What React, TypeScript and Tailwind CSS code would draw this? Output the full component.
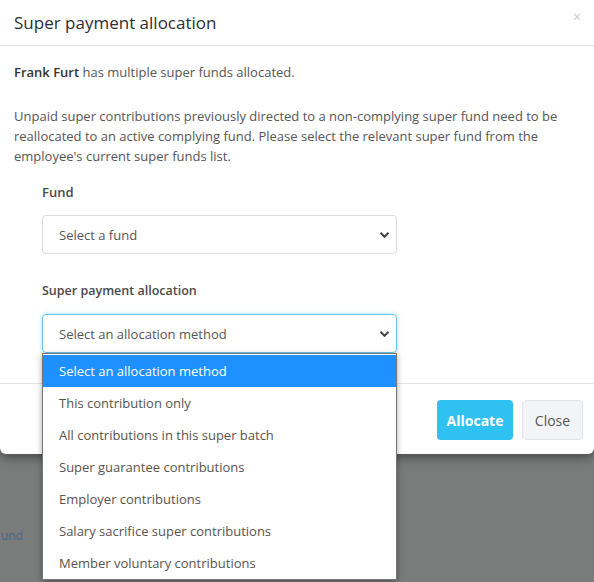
import React from "react";

const Chevron = () => (
  <svg width="11" height="8" viewBox="0 0 11 8" className="absolute right-[6px] top-1/2 -translate-y-1/2">
    <path d="M1.5 1.8 L5.5 5.8 L9.5 1.8" fill="none" stroke="#444" strokeWidth="2" />
  </svg>
);

const options = [
  "Select an allocation method",
  "This contribution only",
  "All contributions in this super batch",
  "Super guarantee contributions",
  "Employer contributions",
  "Salary sacrifice super contributions",
  "Member voluntary contributions",
];

export default function App() {
  return (
    <div
      className="relative w-[594px] h-[582px] overflow-hidden bg-[#7a7c7b] text-[13px] text-[#555]"
      style={{ fontFamily: "'Open Sans', Lato, Arial, sans-serif" }}
    >
      <div className="absolute left-[1px] top-[527px] text-[12px] text-[#3f6683]">und</div>

      <div className="relative bg-white rounded-b-[6px] shadow-[0_3px_12px_rgba(0,0,0,0.45)]">
        <div className="h-[46px] border-b border-[#e3e3e3] flex items-center px-[14px] relative">
          <h1 className="text-[17px] text-[#2b2f33] leading-none">Super payment allocation</h1>
          <span className="absolute right-[13px] top-[6px] text-[14px] text-[#c8c8c8]">×</span>
        </div>

        <div className="px-[14px] pt-[16px] pb-[30px] border-b border-[#e3e3e3] leading-[20px]">
          <p className="mb-[24px]">
            <span className="font-semibold text-[#333]">Frank Furt</span> has multiple super funds allocated.
          </p>
          <p>
            Unpaid super contributions previously directed to a non-complying super fund need to be reallocated to an
            active complying fund. Please select the relevant super fund from the employee's current super funds list.
          </p>

          <div className="pl-[28px] pr-[183px] mt-[16px]">
            <div className="font-semibold text-[#4a4a4a] mb-[13px]">Fund</div>
            <div className="relative h-[39px] border border-[#dcdcdc] rounded-[4px] flex items-center pl-[16px]">
              <span className="text-[#555]">Select a fund</span>
              <Chevron />
            </div>

            <div className="font-semibold text-[#4a4a4a] mt-[27px] mb-[13px] text-[12.5px]">Super payment allocation</div>
            <div className="relative">
              <div className="relative h-[39px] border border-[#66c6ee] rounded-[4px] shadow-[0_0_4px_rgba(102,198,238,0.6)] flex items-center pl-[16px]">
                <span className="text-[#555]">Select an allocation method</span>
                <Chevron />
              </div>
              <div className="absolute left-0 right-0 top-[39px] z-10 bg-white border border-[#767676] shadow-[0_2px_6px_rgba(0,0,0,0.35)] pt-[1px]">
                {options.map((o, i) => (
                  <div
                    key={o}
                    className={
                      "h-[32px] flex items-center pl-[16px] " +
                      (i === 0 ? "bg-[#1e90ff] text-white" : "text-[#5a524e]")
                    }
                  >
                    {o}
                  </div>
                ))}
              </div>
            </div>
          </div>
        </div>

        <div className="flex justify-end gap-[9px] pt-[16px] pb-[14px] pr-[11px]">
          <button className="h-[40px] w-[76px] rounded-[4px] bg-[#2fc1ef] text-white font-bold text-[14px]">
            Allocate
          </button>
          <button className="h-[40px] w-[61px] rounded-[4px] bg-[#f3f4f6] border border-[#e2e4e7] text-[#555] text-[14px]">
            Close
          </button>
        </div>
      </div>
    </div>
  );
}
